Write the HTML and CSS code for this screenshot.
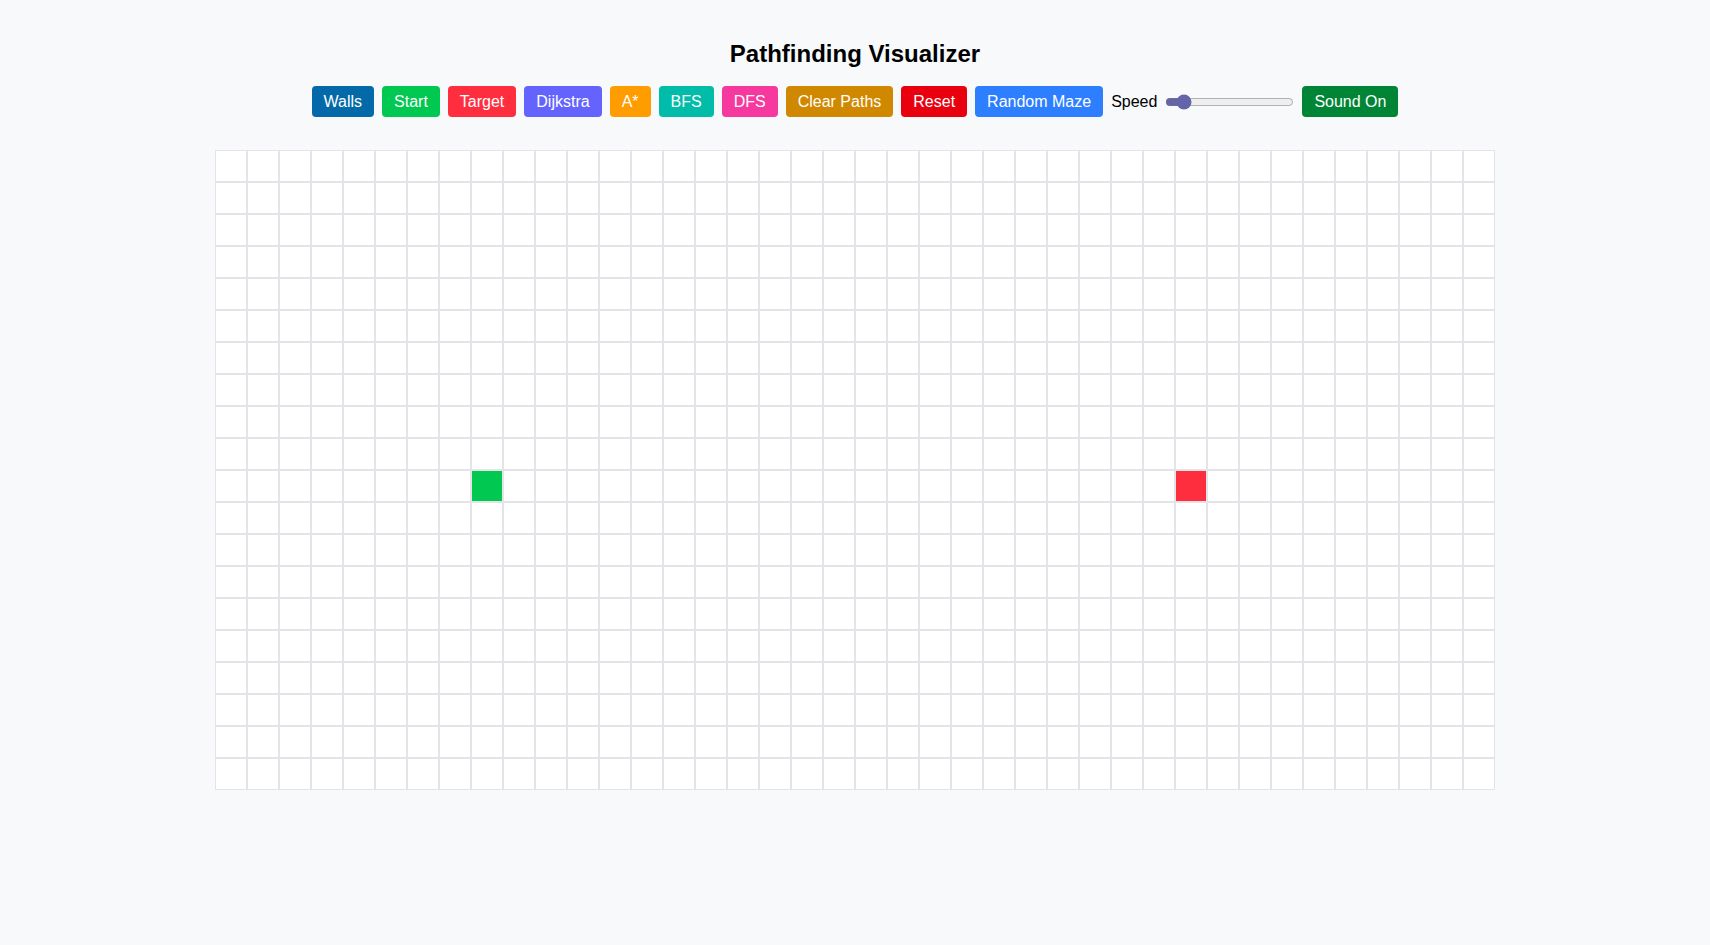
FILE: index.html
```html
<!DOCTYPE html>
<html lang="en">
<head>
<meta charset="utf-8">
<title>Pathfinding Visualizer</title>
<link rel="stylesheet" href="styles.css">
</head>
<body>
<div class="app">
  <h1 class="title">Pathfinding Visualizer</h1>
  <div class="controls">
    <button class="btn walls">Walls</button>
    <button class="btn start">Start</button>
    <button class="btn target">Target</button>
    <button class="btn dijkstra">Dijkstra</button>
    <button class="btn astar">A*</button>
    <button class="btn bfs">BFS</button>
    <button class="btn dfs">DFS</button>
    <button class="btn clear">Clear Paths</button>
    <button class="btn reset">Reset</button>
    <button class="btn maze">Random Maze</button>
    <label class="speed">Speed</label>
    <input class="slider" type="range" min="1" max="100" value="10">
    <button class="btn sound">Sound On</button>
  </div>
  <div class="grid" id="grid"></div>
</div>
<script src="script.js"></script>
</body>
</html>
```

FILE: styles.css
```css
* { box-sizing: border-box; }
html, body {
  margin: 0;
  padding: 0;
  background: #f8f9fb;
  font-family: "Liberation Sans", Arial, sans-serif;
  color: #000;
}
.app {
  display: flex;
  flex-direction: column;
  align-items: center;
  padding-top: 40px;
}
.title {
  margin: 0;
  font-size: 24px;
  font-weight: bold;
  line-height: 27px;
}
.controls {
  display: flex;
  align-items: center;
  gap: 8px;
  margin-top: 19px;
}
.btn {
  border: none;
  border-radius: 4px;
  padding: 6px 12px;
  font-family: "Liberation Sans", Arial, sans-serif;
  font-size: 16px;
  line-height: 19px;
  color: #fff;
  cursor: pointer;
}
.walls { background: #0369a9; }
.start { background: #00c851; }
.target { background: #ff2e3f; }
.dijkstra { background: #6463fe; }
.astar { background: #ff9c00; }
.bfs { background: #00bca9; }
.dfs { background: #f5399e; }
.clear { background: #d08800; }
.reset { background: #e8000f; }
.maze { background: #2d7fff; }
.sound { background: #008536; }
.speed {
  font-size: 16px;
}
.slider {
  width: 129px;
  margin: 0;
  accent-color: #6464aa;
}
.grid {
  margin-top: 33px;
  display: grid;
  grid-template-columns: repeat(40, 32px);
  grid-auto-rows: 32px;
}
.cell {
  border: 1px solid #e4e4e8;
  background: #fff;
}
.cell.is-start { background: #00c851; }
.cell.is-target { background: #ff2e3f; }
```

FILE: script.js
```js
var grid = document.getElementById('grid');
for (var r = 0; r < 20; r++) {
  for (var c = 0; c < 40; c++) {
    var d = document.createElement('div');
    d.className = 'cell';
    if (r === 10 && c === 8) d.className += ' is-start';
    if (r === 10 && c === 30) d.className += ' is-target';
    grid.appendChild(d);
  }
}
```
